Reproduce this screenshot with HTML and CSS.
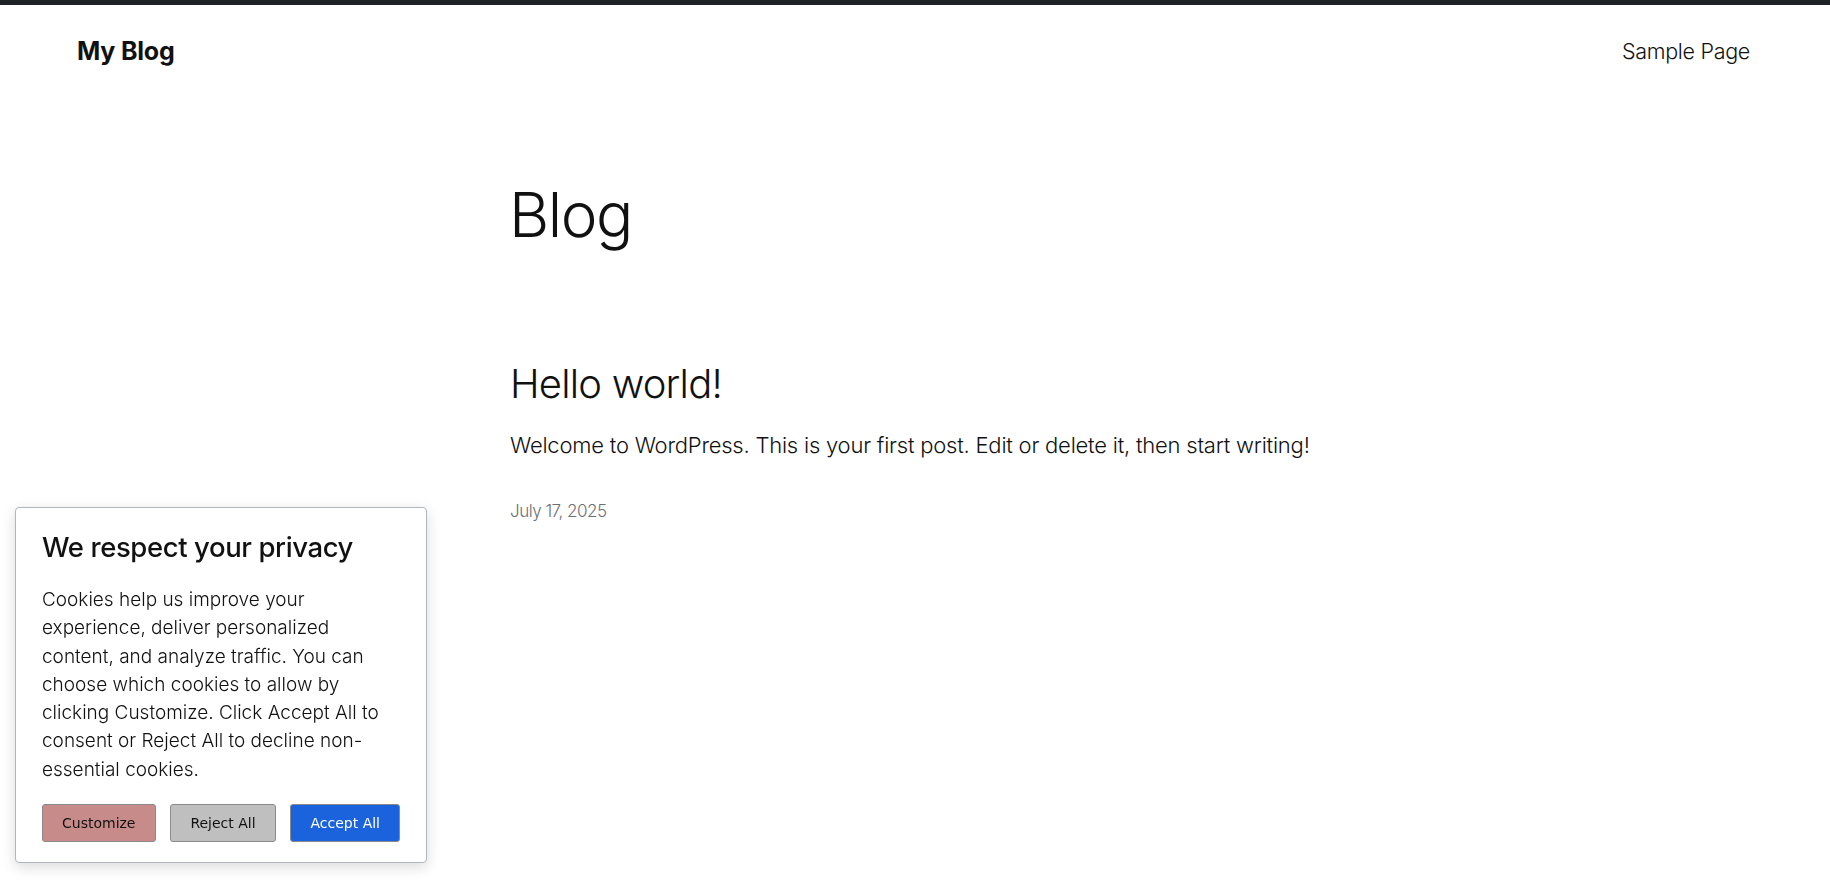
FILE: index.html
```html
<!DOCTYPE html>
<html lang="en">
<head>
    <meta charset="UTF-8">
    <meta name="viewport" content="width=device-width, initial-scale=1.0">
    <title>Blog – My Blog</title>
    <link rel="stylesheet" href="styles.css">
</head>
<body>
    <div class="topbar"></div>
    <header class="site-header">
        <a class="site-title" href="#">My Blog</a>
        <nav>
            <a class="nav-link" href="#">Sample Page</a>
        </nav>
    </header>

    <main class="content">
        <h1 class="page-title">Blog</h1>
        <article class="post">
            <h2 class="post-title">Hello world!</h2>
            <p class="post-excerpt">Welcome to WordPress. This is your first post. Edit or delete it, then start writing!</p>
            <div class="post-date">July 17, 2025</div>
        </article>
    </main>

    <div class="cookie-banner">
        <h3 class="cookie-title">We respect your privacy</h3>
        <p class="cookie-text">Cookies help us improve your experience, deliver personalized content, and analyze traffic. You can choose which cookies to allow by clicking Customize. Click Accept All to consent or Reject All to decline non-essential cookies.</p>
        <div class="cookie-buttons">
            <button class="btn btn-customize">Customize</button>
            <button class="btn btn-reject">Reject All</button>
            <button class="btn btn-accept">Accept All</button>
        </div>
    </div>
</body>
</html>
```

FILE: styles.css
```css
body {
    margin: 0;
    font-family: Inter, "Noto Sans", sans-serif;
    color: #111;
    background: #fff;
}

a {
    color: inherit;
    text-decoration: none;
}

.topbar {
    height: 5px;
    background-color: #1e2125;
}

.site-header {
    display: flex;
    justify-content: space-between;
    align-items: center;
    padding: 23px 80px 0 77px;
    height: 46px;
}

.site-title {
    font-size: 25px;
    font-weight: 700;
    letter-spacing: -0.2px;
}

.nav-link {
    font-size: 21.5px;
    font-weight: 300;
    letter-spacing: -0.3px;
}

.content {
    width: 810px;
    margin: 0 auto;
}

.page-title {
    font-size: 62px;
    font-weight: 300;
    letter-spacing: -1.5px;
    line-height: 1.2;
    margin: 104px 0 0 -1px;
}

.post {
    margin-top: 108px;
}

.post-title {
    font-size: 40px;
    font-weight: 300;
    letter-spacing: -0.8px;
    line-height: 1.2;
    margin: 0;
}

.post-excerpt {
    font-size: 22px;
    font-weight: 300;
    letter-spacing: -0.22px;
    line-height: 1.4;
    margin: 22px 0 0;
}

.post-date {
    font-size: 17px;
    font-weight: 300;
    color: #6b6f75;
    letter-spacing: -0.5px;
    margin-top: 40px;
}

.cookie-banner {
    position: fixed;
    left: 15px;
    bottom: 26px;
    width: 358px;
    padding: 22px 26px 20px 26px;
    background: #fff;
    border: 1px solid #b0b6bd;
    border-radius: 4px;
    box-shadow: 0 4px 14px rgba(0, 0, 0, 0.15);
}

.cookie-title {
    font-size: 27.5px;
    font-weight: 500;
    letter-spacing: -0.4px;
    margin: 0 0 22px;
}

.cookie-text {
    font-size: 19px;
    font-weight: 300;
    line-height: 28.3px;
    margin: 0 0 20px;
}

.cookie-buttons {
    display: flex;
    justify-content: space-between;
}

.btn {
    font-family: "DejaVu Sans", Verdana, sans-serif;
    font-size: 14px;
    height: 38px;
    padding: 0 19px;
    border: 1px solid #8a8a8a;
    border-radius: 3px;
    color: #111;
}

.btn-customize {
    background-color: #c78c8a;
}

.btn-reject {
    background-color: #bfbfbf;
}

.btn-accept {
    background-color: #1a63dc;
    color: #fff;
}
```
